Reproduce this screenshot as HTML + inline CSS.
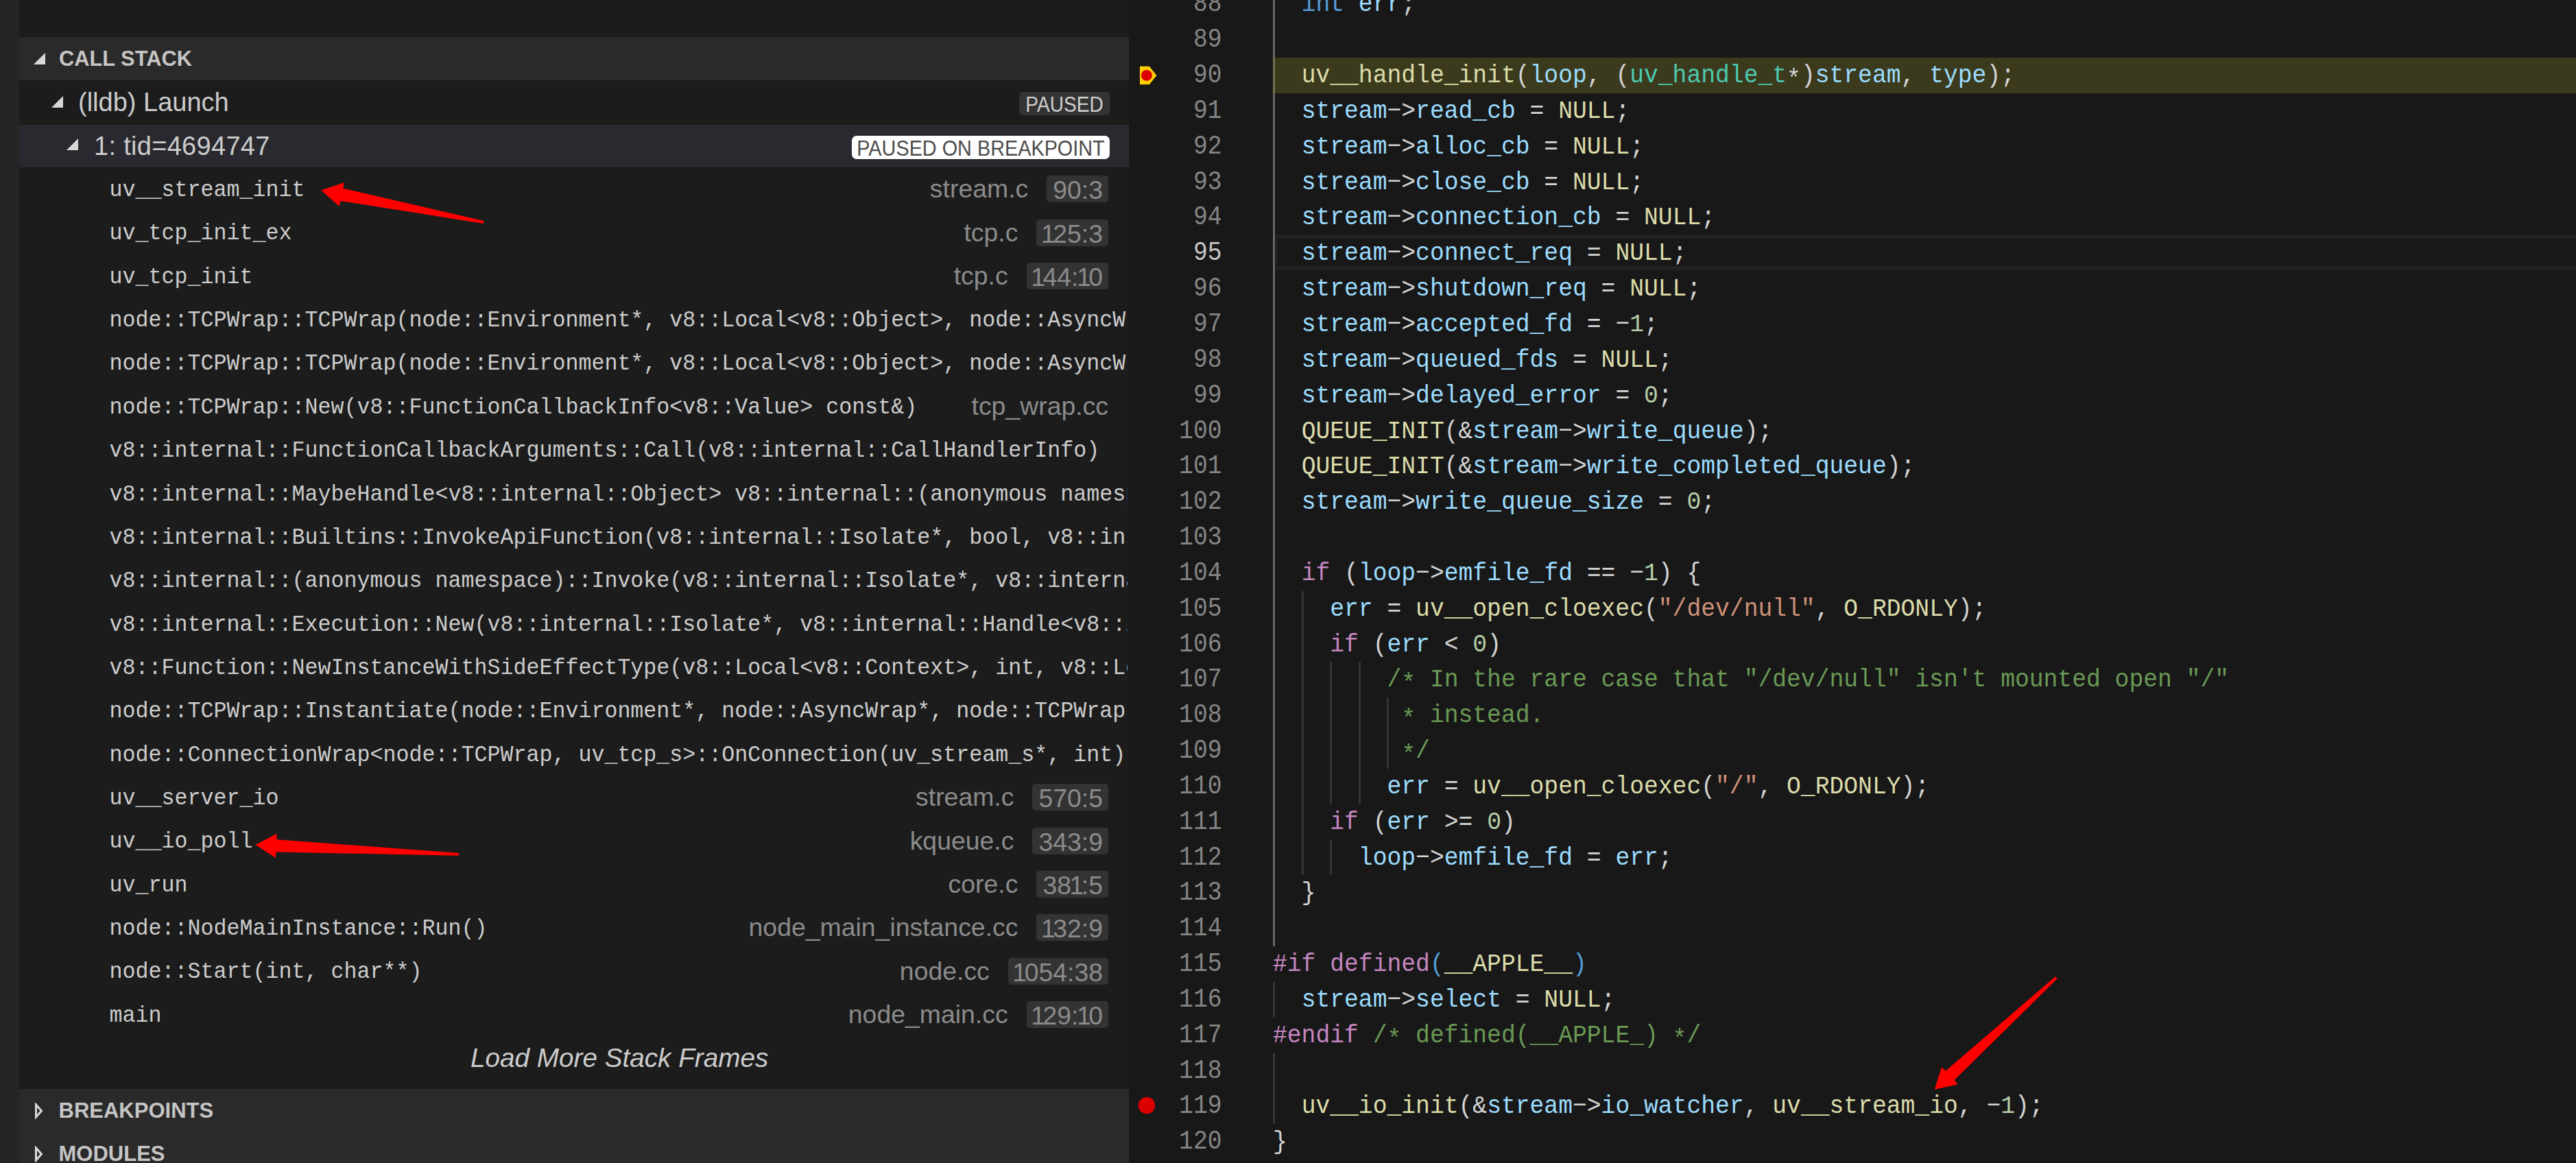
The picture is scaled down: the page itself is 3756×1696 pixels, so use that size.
<!DOCTYPE html>
<html><head><meta charset="utf-8"><style>
html,body{margin:0;padding:0;width:3756px;height:1696px;overflow:hidden;background:#181818}
body{position:relative}
.hd{position:absolute;font:bold 31.4px "Liberation Sans",sans-serif;color:#c5c5c5;line-height:63.36px;white-space:pre}
.ui{position:absolute;font:37.4px "Liberation Sans",sans-serif;color:#cccccc;line-height:63.36px;white-space:pre}
.lm{font-style:italic;font-size:38.7px}
.badge{position:absolute;height:34px;line-height:34px;box-sizing:border-box;background:#333333;color:#cfcfcf;border-radius:5px;font:31.5px "Liberation Sans",sans-serif;text-align:center;white-space:pre}
.bt{position:absolute;left:50%;top:-0.5px;transform-origin:50% 50%}
.wb{background:#ffffff;color:#4b4b4b;border-radius:7px}
.fn{position:absolute;font:31.66px "Liberation Mono",monospace;color:#cccccc;line-height:63.36px;white-space:pre;width:1484px;overflow:hidden;transform:scaleY(1.04);transform-origin:0 40.1px}
.rc{position:absolute;right:30px;height:63.36px;display:flex;align-items:center;background:#1c1c1c;padding-left:24px}
.file{font:37.4px "Liberation Sans",sans-serif;color:#8b8b8b;white-space:pre}
.ln{display:inline-block;margin-left:27px;height:39px;line-height:39px;padding:0 8px 0 9px;background:#333333;border-radius:5px;font:37.4px "Liberation Sans",sans-serif;color:#8b8b8b;white-space:pre}
.one{margin:0 -3.5px 0 -2.5px}
.lnum{position:absolute;left:1700px;width:81.5px;text-align:right;font:34.68px "Liberation Mono",monospace;color:#858585;line-height:51.84px;white-space:pre;transform:translateY(1.2px) scaleY(1.1);transform-origin:0 35.1px}
.act{color:#c6c6c6}
.ast{position:relative;top:5.5px}
.cl{position:absolute;left:1856px;font:34.68px "Liberation Mono",monospace;color:#d4d4d4;line-height:51.84px;white-space:pre;transform:translateY(0.8px) scaleY(1.05);transform-origin:0 35.1px}
</style></head>
<body>
<div style="position:absolute;left:0;top:0;width:28px;height:1696px;background:#252525"></div>
<div style="position:absolute;left:28px;top:0;width:1618px;height:1696px;background:#1c1c1c;overflow:hidden">
<div style="position:absolute;left:0;top:54px;width:1618px;height:63.36px;background:#2a2a2a"></div>
<svg style="position:absolute;left:21px;top:76.5px" width="18" height="18" viewBox="0 0 18 18"><polygon points="17,0 17,17 0,17" fill="#d8d8d8"/></svg>
<div class="hd" style="left:58px;top:54px;font-size:30.8px">CALL STACK</div>
<svg style="position:absolute;left:47px;top:140px" width="18" height="18" viewBox="0 0 18 18"><polygon points="17,0 17,17 0,17" fill="#d8d8d8"/></svg>
<div class="ui" style="left:86px;top:118.36px;font-size:38px">(lldb) Launch</div>
<div class="badge" style="right:28px;top:134px;width:132px"><span class="bt" style="transform:translateX(-50%) scaleX(0.892)">PAUSED</span></div>
<div style="position:absolute;left:0;top:181.9px;width:1618px;height:62.099999999999994px;background:#29292f"></div>
<svg style="position:absolute;left:69px;top:202px" width="18" height="18" viewBox="0 0 18 18"><polygon points="17,0 17,17 0,17" fill="#d8d8d8"/></svg>
<div class="ui" style="left:109px;top:181.9px;font-size:38px;letter-spacing:0.3px">1: tid=4694747</div>
<div class="badge wb" style="right:28px;top:198px;width:376px"><span class="bt" style="transform:translateX(-50%) scaleX(0.915)">PAUSED ON BREAKPOINT</span></div>
<div class="fn" style="left:131.5px;top:247.0px">uv__stream_init</div>
<div class="rc" style="top:244.0px"><span class="file">stream.c</span><span class="ln">90:3</span></div>
<div class="fn" style="left:131.5px;top:310.36px">uv_tcp_init_ex</div>
<div class="rc" style="top:307.36px"><span class="file">tcp.c</span><span class="ln"><span class="one">1</span>25:3</span></div>
<div class="fn" style="left:131.5px;top:373.72px">uv_tcp_init</div>
<div class="rc" style="top:370.72px"><span class="file">tcp.c</span><span class="ln"><span class="one">1</span>44:<span class="one">1</span>0</span></div>
<div class="fn" style="left:131.5px;top:437.08px">node::TCPWrap::TCPWrap(node::Environment*, v8::Local&lt;v8::Object&gt;, node::AsyncWrap::ProviderType)</div>
<div class="fn" style="left:131.5px;top:500.44px">node::TCPWrap::TCPWrap(node::Environment*, v8::Local&lt;v8::Object&gt;, node::AsyncWrap::ProviderType)</div>
<div class="fn" style="left:131.5px;top:563.8px">node::TCPWrap::New(v8::FunctionCallbackInfo&lt;v8::Value&gt; const&amp;)</div>
<div class="rc" style="top:560.8px"><span class="file">tcp_wrap.cc</span></div>
<div class="fn" style="left:131.5px;top:627.16px">v8::internal::FunctionCallbackArguments::Call(v8::internal::CallHandlerInfo)</div>
<div class="fn" style="left:131.5px;top:690.52px">v8::internal::MaybeHandle&lt;v8::internal::Object&gt; v8::internal::(anonymous namespace)::HandleApiCallHelper&lt;false&gt;</div>
<div class="fn" style="left:131.5px;top:753.88px">v8::internal::Builtins::InvokeApiFunction(v8::internal::Isolate*, bool, v8::internal::Handle</div>
<div class="fn" style="left:131.5px;top:817.24px">v8::internal::(anonymous namespace)::Invoke(v8::internal::Isolate*, v8::internal::Execution</div>
<div class="fn" style="left:131.5px;top:880.6px">v8::internal::Execution::New(v8::internal::Isolate*, v8::internal::Handle&lt;v8::internal::Object&gt;</div>
<div class="fn" style="left:131.5px;top:943.96px">v8::Function::NewInstanceWithSideEffectType(v8::Local&lt;v8::Context&gt;, int, v8::Local&lt;v8::Value&gt;</div>
<div class="fn" style="left:131.5px;top:1007.3199999999999px">node::TCPWrap::Instantiate(node::Environment*, node::AsyncWrap*, node::TCPWrap::SocketType)</div>
<div class="fn" style="left:131.5px;top:1070.6799999999998px">node::ConnectionWrap&lt;node::TCPWrap, uv_tcp_s&gt;::OnConnection(uv_stream_s*, int)</div>
<div class="fn" style="left:131.5px;top:1134.04px">uv__server_io</div>
<div class="rc" style="top:1131.04px"><span class="file">stream.c</span><span class="ln">570:5</span></div>
<div class="fn" style="left:131.5px;top:1197.4px">uv__io_poll</div>
<div class="rc" style="top:1194.4px"><span class="file">kqueue.c</span><span class="ln">343:9</span></div>
<div class="fn" style="left:131.5px;top:1260.76px">uv_run</div>
<div class="rc" style="top:1257.76px"><span class="file">core.c</span><span class="ln">38<span class="one">1</span>:5</span></div>
<div class="fn" style="left:131.5px;top:1324.12px">node::NodeMainInstance::Run()</div>
<div class="rc" style="top:1321.12px"><span class="file">node_main_instance.cc</span><span class="ln"><span class="one">1</span>32:9</span></div>
<div class="fn" style="left:131.5px;top:1387.48px">node::Start(int, char**)</div>
<div class="rc" style="top:1384.48px"><span class="file">node.cc</span><span class="ln"><span class="one">1</span>054:38</span></div>
<div class="fn" style="left:131.5px;top:1450.84px">main</div>
<div class="rc" style="top:1447.84px"><span class="file">node_main.cc</span><span class="ln"><span class="one">1</span>29:<span class="one">1</span>0</span></div>
<div class="ui lm" style="left:658px;top:1511.2px">Load More Stack Frames</div>
<div style="position:absolute;left:0;top:1588.0px;width:1618px;height:63.36px;background:#2a2a2a"></div>
<svg style="position:absolute;left:21px;top:1608.0px" width="14" height="24" viewBox="0 0 14 24"><polygon points="3.5,3 11.5,12 3.5,21" fill="none" stroke="#d8d8d8" stroke-width="3"/></svg>
<div class="hd" style="left:57.5px;top:1588.0px;font-size:31px">BREAKPOINTS</div>
<div style="position:absolute;left:0;top:1651.36px;width:1618px;height:63.36px;background:#2a2a2a"></div>
<svg style="position:absolute;left:21px;top:1671.36px" width="14" height="24" viewBox="0 0 14 24"><polygon points="3.5,3 11.5,12 3.5,21" fill="none" stroke="#d8d8d8" stroke-width="3"/></svg>
<div class="hd" style="left:57.5px;top:1651.36px;font-size:31px">MODULES</div>
</div>
<div style="position:absolute;left:1856px;top:84.10px;width:1900px;height:51.84px;background:#3b3a1d"></div>
<div style="position:absolute;left:1859.5px;top:341.90px;width:1896.5px;height:51.84px;box-sizing:border-box;border:6px solid #212121;border-left-width:3px;border-right:none"></div>
<div style="position:absolute;left:1856.00px;top:-19.58px;width:3px;height:1399.68px;background:#676767"></div>
<div style="position:absolute;left:1856.00px;top:1431.94px;width:3px;height:51.84px;background:#343434"></div>
<div style="position:absolute;left:1856.00px;top:1535.62px;width:3px;height:103.68px;background:#343434"></div>
<div style="position:absolute;left:1897.62px;top:861.70px;width:3px;height:414.72px;background:#343434"></div>
<div style="position:absolute;left:1939.24px;top:965.38px;width:3px;height:207.36px;background:#343434"></div>
<div style="position:absolute;left:1939.24px;top:1224.58px;width:3px;height:51.84px;background:#343434"></div>
<div style="position:absolute;left:1980.86px;top:965.38px;width:3px;height:207.36px;background:#343434"></div>
<div style="position:absolute;left:2022.48px;top:1017.22px;width:3px;height:103.68px;background:#343434"></div>
<div style="position:absolute;left:1856px;top:84.10px;width:3px;height:51.84px;background:#72714f"></div>
<div class="lnum" style="top:-19.58px">88</div>
<div class="lnum" style="top:32.26px">89</div>
<div class="lnum" style="top:84.10px">90</div>
<div class="lnum" style="top:135.94px">91</div>
<div class="lnum" style="top:187.78px">92</div>
<div class="lnum" style="top:239.62px">93</div>
<div class="lnum" style="top:291.46px">94</div>
<div class="lnum act" style="top:343.30px">95</div>
<div class="lnum" style="top:395.14px">96</div>
<div class="lnum" style="top:446.98px">97</div>
<div class="lnum" style="top:498.82px">98</div>
<div class="lnum" style="top:550.66px">99</div>
<div class="lnum" style="top:602.50px">100</div>
<div class="lnum" style="top:654.34px">101</div>
<div class="lnum" style="top:706.18px">102</div>
<div class="lnum" style="top:758.02px">103</div>
<div class="lnum" style="top:809.86px">104</div>
<div class="lnum" style="top:861.70px">105</div>
<div class="lnum" style="top:913.54px">106</div>
<div class="lnum" style="top:965.38px">107</div>
<div class="lnum" style="top:1017.22px">108</div>
<div class="lnum" style="top:1069.06px">109</div>
<div class="lnum" style="top:1120.90px">110</div>
<div class="lnum" style="top:1172.74px">111</div>
<div class="lnum" style="top:1224.58px">112</div>
<div class="lnum" style="top:1276.42px">113</div>
<div class="lnum" style="top:1328.26px">114</div>
<div class="lnum" style="top:1380.10px">115</div>
<div class="lnum" style="top:1431.94px">116</div>
<div class="lnum" style="top:1483.78px">117</div>
<div class="lnum" style="top:1535.62px">118</div>
<div class="lnum" style="top:1587.46px">119</div>
<div class="lnum" style="top:1639.30px">120</div>
<div class="cl" style="top:-19.58px"><span style="color:#d4d4d4">  </span><span style="color:#569cd6">int</span><span style="color:#d4d4d4"> </span><span style="color:#9cdcfe">err</span><span style="color:#d4d4d4">;</span></div>
<div class="cl" style="top:32.26px"></div>
<div class="cl" style="top:84.10px"><span style="color:#d4d4d4">  </span><span style="color:#dcdcaa">uv__handle_init</span><span style="color:#d4d4d4">(</span><span style="color:#9cdcfe">loop</span><span style="color:#d4d4d4">, (</span><span style="color:#4ec9b0">uv_handle_t</span><span style="color:#d4d4d4"><span class="ast">*</span>)</span><span style="color:#9cdcfe">stream</span><span style="color:#d4d4d4">, </span><span style="color:#9cdcfe">type</span><span style="color:#d4d4d4">);</span></div>
<div class="cl" style="top:135.94px"><span style="color:#d4d4d4">  </span><span style="color:#9cdcfe">stream</span><span style="color:#d4d4d4">&#8722;&gt;</span><span style="color:#9cdcfe">read_cb</span><span style="color:#d4d4d4"> = </span><span style="color:#dcdcaa">NULL</span><span style="color:#d4d4d4">;</span></div>
<div class="cl" style="top:187.78px"><span style="color:#d4d4d4">  </span><span style="color:#9cdcfe">stream</span><span style="color:#d4d4d4">&#8722;&gt;</span><span style="color:#9cdcfe">alloc_cb</span><span style="color:#d4d4d4"> = </span><span style="color:#dcdcaa">NULL</span><span style="color:#d4d4d4">;</span></div>
<div class="cl" style="top:239.62px"><span style="color:#d4d4d4">  </span><span style="color:#9cdcfe">stream</span><span style="color:#d4d4d4">&#8722;&gt;</span><span style="color:#9cdcfe">close_cb</span><span style="color:#d4d4d4"> = </span><span style="color:#dcdcaa">NULL</span><span style="color:#d4d4d4">;</span></div>
<div class="cl" style="top:291.46px"><span style="color:#d4d4d4">  </span><span style="color:#9cdcfe">stream</span><span style="color:#d4d4d4">&#8722;&gt;</span><span style="color:#9cdcfe">connection_cb</span><span style="color:#d4d4d4"> = </span><span style="color:#dcdcaa">NULL</span><span style="color:#d4d4d4">;</span></div>
<div class="cl" style="top:343.30px"><span style="color:#d4d4d4">  </span><span style="color:#9cdcfe">stream</span><span style="color:#d4d4d4">&#8722;&gt;</span><span style="color:#9cdcfe">connect_req</span><span style="color:#d4d4d4"> = </span><span style="color:#dcdcaa">NULL</span><span style="color:#d4d4d4">;</span></div>
<div class="cl" style="top:395.14px"><span style="color:#d4d4d4">  </span><span style="color:#9cdcfe">stream</span><span style="color:#d4d4d4">&#8722;&gt;</span><span style="color:#9cdcfe">shutdown_req</span><span style="color:#d4d4d4"> = </span><span style="color:#dcdcaa">NULL</span><span style="color:#d4d4d4">;</span></div>
<div class="cl" style="top:446.98px"><span style="color:#d4d4d4">  </span><span style="color:#9cdcfe">stream</span><span style="color:#d4d4d4">&#8722;&gt;</span><span style="color:#9cdcfe">accepted_fd</span><span style="color:#d4d4d4"> = &#8722;</span><span style="color:#b5cea8">1</span><span style="color:#d4d4d4">;</span></div>
<div class="cl" style="top:498.82px"><span style="color:#d4d4d4">  </span><span style="color:#9cdcfe">stream</span><span style="color:#d4d4d4">&#8722;&gt;</span><span style="color:#9cdcfe">queued_fds</span><span style="color:#d4d4d4"> = </span><span style="color:#dcdcaa">NULL</span><span style="color:#d4d4d4">;</span></div>
<div class="cl" style="top:550.66px"><span style="color:#d4d4d4">  </span><span style="color:#9cdcfe">stream</span><span style="color:#d4d4d4">&#8722;&gt;</span><span style="color:#9cdcfe">delayed_error</span><span style="color:#d4d4d4"> = </span><span style="color:#b5cea8">0</span><span style="color:#d4d4d4">;</span></div>
<div class="cl" style="top:602.50px"><span style="color:#d4d4d4">  </span><span style="color:#dcdcaa">QUEUE_INIT</span><span style="color:#d4d4d4">(&amp;</span><span style="color:#9cdcfe">stream</span><span style="color:#d4d4d4">&#8722;&gt;</span><span style="color:#9cdcfe">write_queue</span><span style="color:#d4d4d4">);</span></div>
<div class="cl" style="top:654.34px"><span style="color:#d4d4d4">  </span><span style="color:#dcdcaa">QUEUE_INIT</span><span style="color:#d4d4d4">(&amp;</span><span style="color:#9cdcfe">stream</span><span style="color:#d4d4d4">&#8722;&gt;</span><span style="color:#9cdcfe">write_completed_queue</span><span style="color:#d4d4d4">);</span></div>
<div class="cl" style="top:706.18px"><span style="color:#d4d4d4">  </span><span style="color:#9cdcfe">stream</span><span style="color:#d4d4d4">&#8722;&gt;</span><span style="color:#9cdcfe">write_queue_size</span><span style="color:#d4d4d4"> = </span><span style="color:#b5cea8">0</span><span style="color:#d4d4d4">;</span></div>
<div class="cl" style="top:758.02px"></div>
<div class="cl" style="top:809.86px"><span style="color:#d4d4d4">  </span><span style="color:#c586c0">if</span><span style="color:#d4d4d4"> (</span><span style="color:#9cdcfe">loop</span><span style="color:#d4d4d4">&#8722;&gt;</span><span style="color:#9cdcfe">emfile_fd</span><span style="color:#d4d4d4"> == &#8722;</span><span style="color:#b5cea8">1</span><span style="color:#d4d4d4">) {</span></div>
<div class="cl" style="top:861.70px"><span style="color:#d4d4d4">    </span><span style="color:#9cdcfe">err</span><span style="color:#d4d4d4"> = </span><span style="color:#dcdcaa">uv__open_cloexec</span><span style="color:#d4d4d4">(</span><span style="color:#ce9178">&quot;/dev/null&quot;</span><span style="color:#d4d4d4">, </span><span style="color:#dcdcaa">O_RDONLY</span><span style="color:#d4d4d4">);</span></div>
<div class="cl" style="top:913.54px"><span style="color:#d4d4d4">    </span><span style="color:#c586c0">if</span><span style="color:#d4d4d4"> (</span><span style="color:#9cdcfe">err</span><span style="color:#d4d4d4"> &lt; </span><span style="color:#b5cea8">0</span><span style="color:#d4d4d4">)</span></div>
<div class="cl" style="top:965.38px"><span style="color:#d4d4d4">        </span><span style="color:#6a9955">/<span class="ast">*</span> In the rare case that &quot;/dev/null&quot; isn&#x27;t mounted open &quot;/&quot;</span></div>
<div class="cl" style="top:1017.22px"><span style="color:#d4d4d4">         </span><span style="color:#6a9955"><span class="ast">*</span> instead.</span></div>
<div class="cl" style="top:1069.06px"><span style="color:#d4d4d4">         </span><span style="color:#6a9955"><span class="ast">*</span>/</span></div>
<div class="cl" style="top:1120.90px"><span style="color:#d4d4d4">        </span><span style="color:#9cdcfe">err</span><span style="color:#d4d4d4"> = </span><span style="color:#dcdcaa">uv__open_cloexec</span><span style="color:#d4d4d4">(</span><span style="color:#ce9178">&quot;/&quot;</span><span style="color:#d4d4d4">, </span><span style="color:#dcdcaa">O_RDONLY</span><span style="color:#d4d4d4">);</span></div>
<div class="cl" style="top:1172.74px"><span style="color:#d4d4d4">    </span><span style="color:#c586c0">if</span><span style="color:#d4d4d4"> (</span><span style="color:#9cdcfe">err</span><span style="color:#d4d4d4"> &gt;= </span><span style="color:#b5cea8">0</span><span style="color:#d4d4d4">)</span></div>
<div class="cl" style="top:1224.58px"><span style="color:#d4d4d4">      </span><span style="color:#9cdcfe">loop</span><span style="color:#d4d4d4">&#8722;&gt;</span><span style="color:#9cdcfe">emfile_fd</span><span style="color:#d4d4d4"> = </span><span style="color:#9cdcfe">err</span><span style="color:#d4d4d4">;</span></div>
<div class="cl" style="top:1276.42px"><span style="color:#d4d4d4">  }</span></div>
<div class="cl" style="top:1328.26px"></div>
<div class="cl" style="top:1380.10px"><span style="color:#c586c0">#if defined</span><span style="color:#569cd6">(</span><span style="color:#dcdcaa">__APPLE__</span><span style="color:#569cd6">)</span></div>
<div class="cl" style="top:1431.94px"><span style="color:#d4d4d4">  </span><span style="color:#9cdcfe">stream</span><span style="color:#d4d4d4">&#8722;&gt;</span><span style="color:#9cdcfe">select</span><span style="color:#d4d4d4"> = </span><span style="color:#dcdcaa">NULL</span><span style="color:#d4d4d4">;</span></div>
<div class="cl" style="top:1483.78px"><span style="color:#c586c0">#endif</span><span style="color:#6a9955"> /<span class="ast">*</span> defined(__APPLE_) <span class="ast">*</span>/</span></div>
<div class="cl" style="top:1535.62px"></div>
<div class="cl" style="top:1587.46px"><span style="color:#d4d4d4">  </span><span style="color:#dcdcaa">uv__io_init</span><span style="color:#d4d4d4">(&amp;</span><span style="color:#9cdcfe">stream</span><span style="color:#d4d4d4">&#8722;&gt;</span><span style="color:#9cdcfe">io_watcher</span><span style="color:#d4d4d4">, </span><span style="color:#dcdcaa">uv__stream_io</span><span style="color:#d4d4d4">, &#8722;</span><span style="color:#b5cea8">1</span><span style="color:#d4d4d4">);</span></div>
<div class="cl" style="top:1639.30px"><span style="color:#d4d4d4">}</span></div>
<svg style="position:absolute;left:1660px;top:95px" width="30" height="30" viewBox="1660 95 30 30"><polygon points="1662,96.7 1675.8,96.7 1686.5,110 1675.8,123.3 1662,123.3" fill="#ffcc00"/><circle cx="1671.9" cy="109.9" r="8" fill="#dc0000"/></svg>
<svg style="position:absolute;left:1655px;top:1595px" width="34" height="34" viewBox="1655 1595 34 34"><circle cx="1672" cy="1612" r="12.2" fill="#dc0000"/></svg>
<svg style="position:absolute;left:0;top:0" width="3756" height="1696" viewBox="0 0 3756 1696"><polygon fill="#ff0000" points="468.3,277.5 501.7,266.2 500.3,274.7 704.9,322.1 704.9,325.9 496.5,293 494.5,300.8"/><polygon fill="#ff0000" points="372.5,1232 403.6,1215.7 403.3,1224.3 668.9,1243.9 668.9,1247.8 402.2,1242.5 402,1251"/><polygon fill="#ff0000" points="2820.7,1588.8 2831.1,1556.1 2836.8,1561.8 2996.7,1424.2 2999.9,1427.1 2849.6,1575 2854.7,1581.6"/></svg>
</body></html>
